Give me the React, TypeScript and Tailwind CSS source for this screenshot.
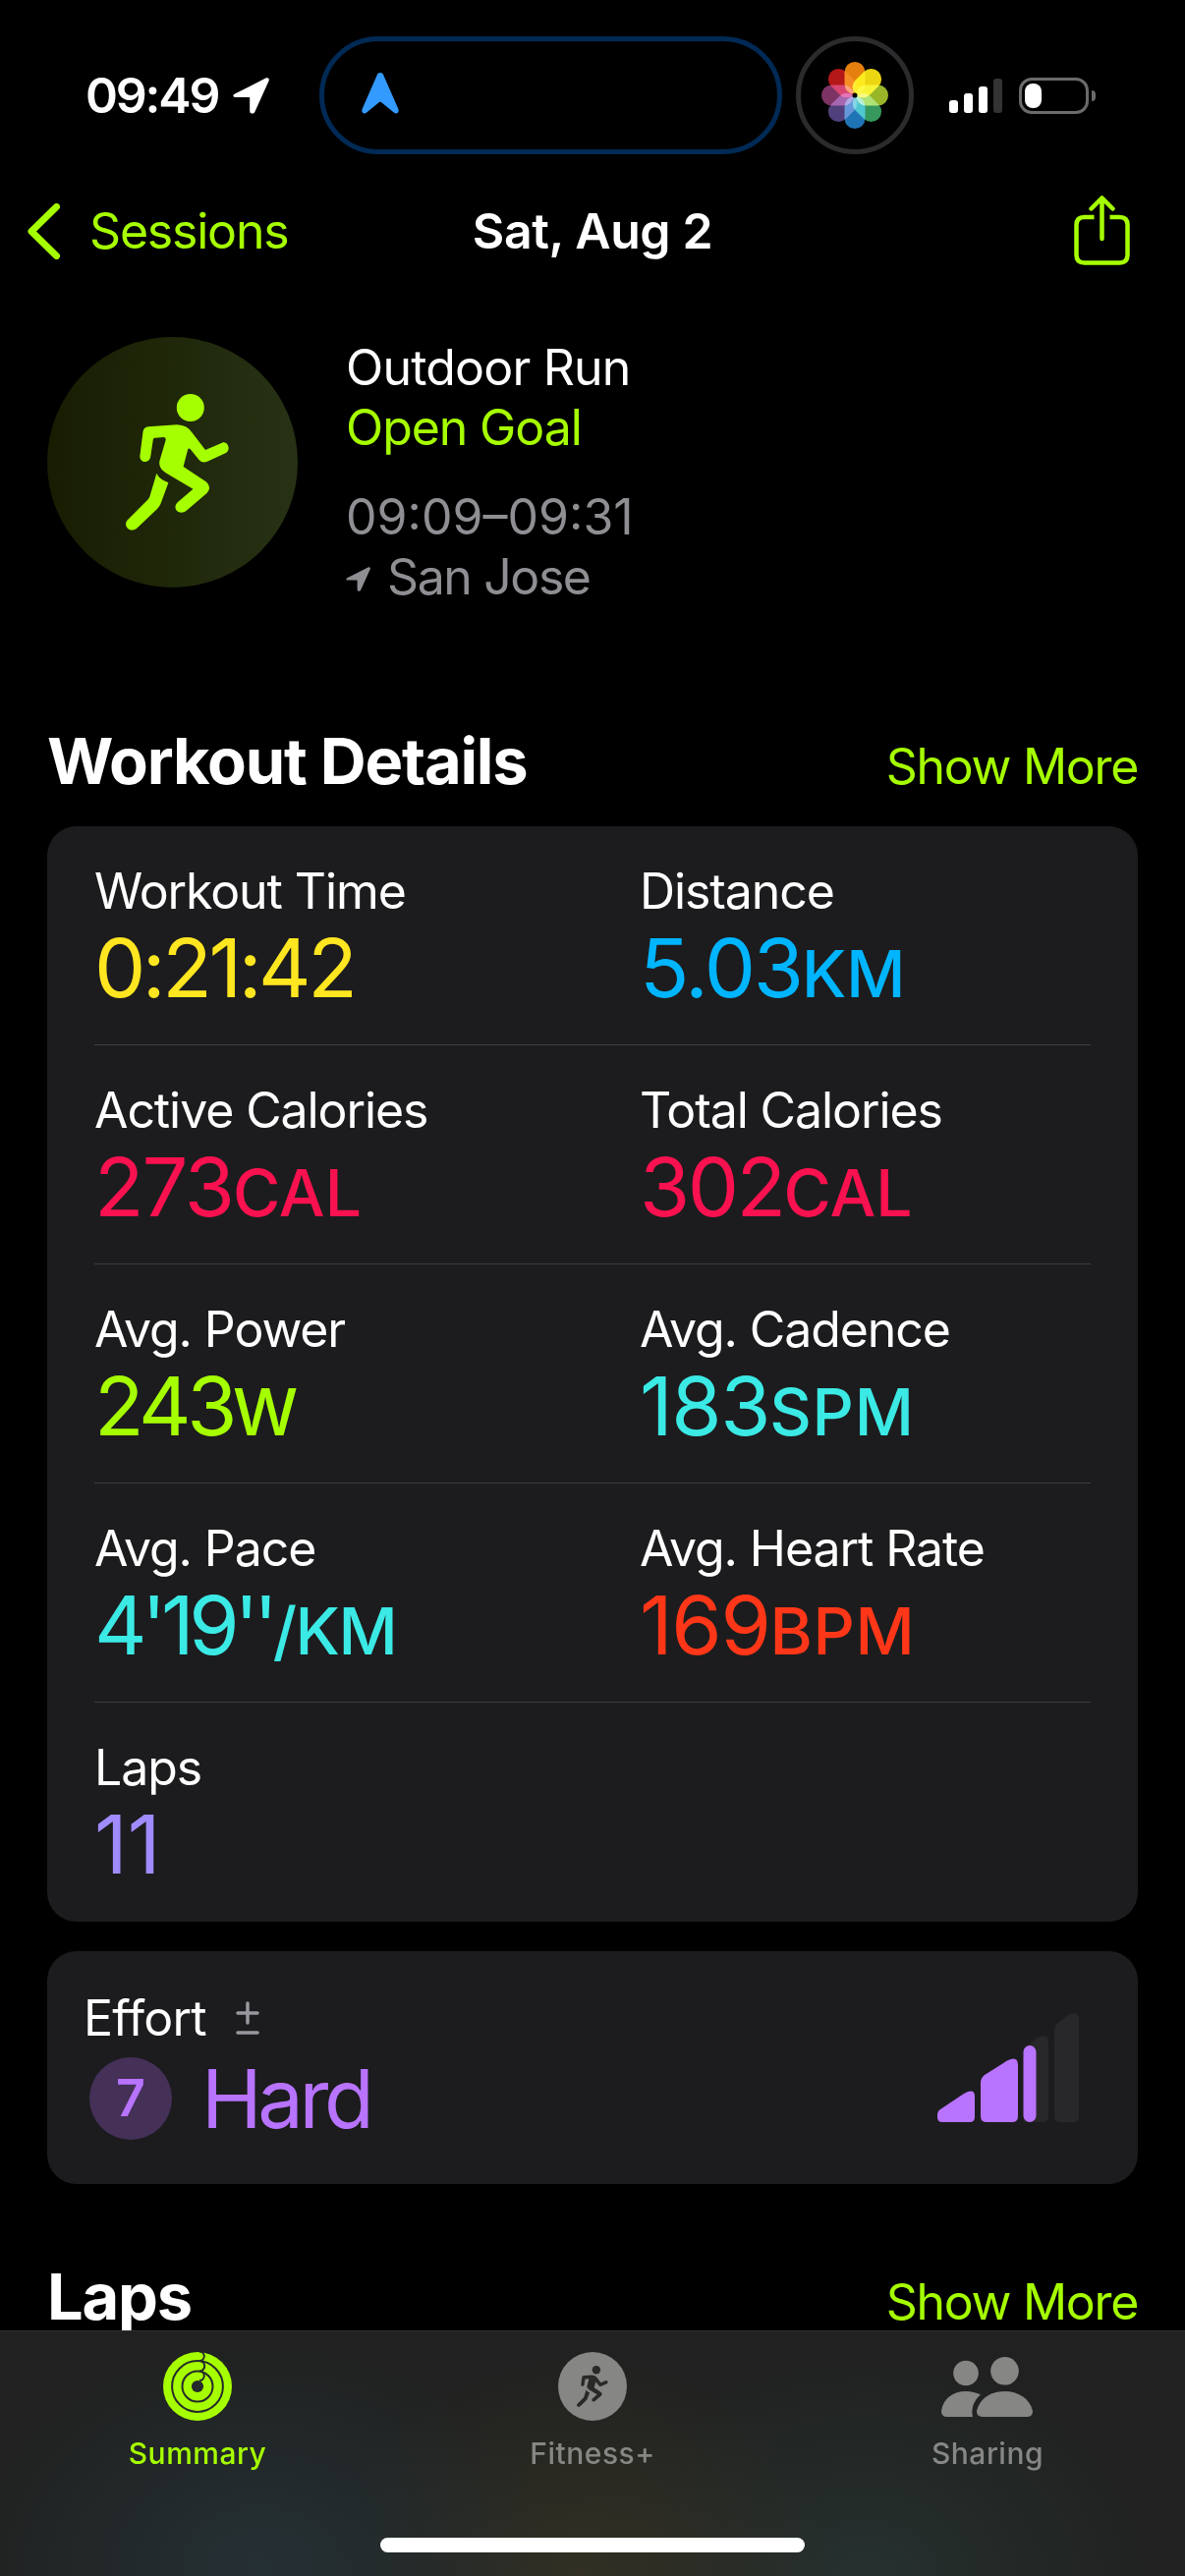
import type { ReactNode } from 'react'

type Metric = { label: string; value: string; unit?: string; color: string; tracking: string; unitTracking?: string }

const rows: Metric[][] = [
  [
    { label: 'Workout Time', value: '0:21:42', color: 'text-[#ffe620]', tracking: 'tracking-[-3.5px]' },
    { label: 'Distance', value: '5.03', unit: 'KM', color: 'text-[#00b5ff]', tracking: 'tracking-[-2.2px]' },
  ],
  [
    { label: 'Active Calories', value: '273', unit: 'CAL', color: 'text-[#fa114f]', tracking: 'tracking-[-2.2px]' },
    { label: 'Total Calories', value: '302', unit: 'CAL', color: 'text-[#fa114f]', tracking: 'tracking-[-2.6px]' },
  ],
  [
    { label: 'Avg. Power', value: '243', unit: 'W', color: 'text-[#a6ff00]', tracking: 'tracking-[-4.4px]' },
    { label: 'Avg. Cadence', value: '183', unit: 'SPM', color: 'text-[#3be9e5]', tracking: 'tracking-[-1.4px]', unitTracking: 'tracking-[0.8px]' },
  ],
  [
    { label: 'Avg. Pace', value: "4'19''", unit: '/KM', color: 'text-[#3be9e5]', tracking: 'tracking-[-5.3px]', unitTracking: 'tracking-[-1.5px]' },
    { label: 'Avg. Heart Rate', value: '169', unit: 'BPM', color: 'text-[#ff3718]', tracking: 'tracking-[-1.4px]', unitTracking: 'tracking-[0.6px]' },
  ],
  [{ label: 'Laps', value: '11', color: 'text-[#a18bff]', tracking: 'tracking-normal' }],
]

const petals = [
  { angle: 0, color: '#e5800f' },
  { angle: 45, color: '#ecd612' },
  { angle: 90, color: '#98b628' },
  { angle: 135, color: '#36985c' },
  { angle: 180, color: '#1f74b6' },
  { angle: 225, color: '#50407c' },
  { angle: 270, color: '#7c3464' },
  { angle: 315, color: '#b41818' },
]

function LocationArrow({ className }: { className: string }) {
  return (
    <svg viewBox="0 0 37 37" className={className} fill="currentColor">
      <path d="M2 16.5 33.5 .6C35.8-.5 37.6 1.3 36.5 3.6L22.3 35C21.2 37.5 17.2 37 17.2 34V20.6Q17.2 20 16.6 20H3C0 20-.6 17.8 2 16.5Z" />
    </svg>
  )
}

function Runner({ className }: { className: string }) {
  return (
    <svg viewBox="128 400 106 139" className={className} fill="currentColor">
      <circle cx="193.8" cy="414" r="14" />
      <path d="M151 433.2 180 431.2Q191 431.5 196 440L209 457 226 449.7C231.5 447.5 235.5 456.5 230 460L211 468.8Q206 471 202.5 467L194 456.5Q192 454.5 191 457L186.6 474 210 489.5Q216 495 210.5 501L190 518.5C183 524.5 174.5 517 180.5 510.5L196.5 496.7 169 480.5Q160.5 475 162.6 467.5L168.7 446.7Q169 444 166.5 444L157.5 444.8Q156 445 155.8 446.5L153.2 464C152 471 142 470.5 142.4 463L145.5 438.5Q146.3 433.5 151 433.2Z" />
      <path d="M159.4 480.7Q162 487 171.4 490.2L163.8 511Q162.6 514.5 160 517L139.5 536.5C132.5 542.5 124.5 534.5 129.8 528.2L150.5 507.5Q152 505.8 152.5 504Z" />
    </svg>
  )
}

function StatusBar() {
  return (
    <div className="flex h-[157px] items-start pt-[37px]">
      <div className="flex h-[120px] w-[325px] items-center gap-[15px] pl-[87px] text-white">
        <span className="text-[50px] font-semibold tracking-[-2.2px]">09:49</span>
        <LocationArrow className="h-[37px] w-[37px]" />
      </div>
      <div className="flex h-[120px] w-[471px] items-center rounded-full border-[5px] border-[#002a55] pl-[38px]">
        <svg viewBox="0 0 38 42" className="mb-1 h-[42px] w-[38px]" fill="#339aff">
          <path d="M15.7 2.5C16.8-.7 21.2-.7 22.3 2.5L37.4 37C38.6 40.5 35.5 43 32.8 40.5L20 30Q19 29.2 18 30L5.2 40.5C2.5 43-.6 40.5 .6 37Z" />
        </svg>
      </div>
      <div className="ml-3.5 flex h-[120px] w-[120px] items-center justify-center rounded-full border-[5px] border-[#2b2b2d]">
        <svg viewBox="-35 -35 70 70" className="h-[70px] w-[70px]">
          {petals.map((p) => (
            <rect key={p.angle} x="-10.5" y="-34" width="21" height="33" rx="10.5" fill={p.color} transform={`rotate(${p.angle})`} className="mix-blend-screen" />
          ))}
          <circle r="2.5" fill="#000" />
        </svg>
      </div>
      <div className="flex h-[120px] items-center gap-[17px] pl-9">
        <div className="flex h-[35px] items-end gap-1.5">
          <div className="h-[13px] w-[9px] rounded-[3px] bg-white" />
          <div className="h-5 w-[9px] rounded-[3px] bg-white" />
          <div className="h-[27px] w-[9px] rounded-[3px] bg-white" />
          <div className="h-[35px] w-[9px] rounded-[3px] bg-[#333]" />
        </div>
        <div className="flex items-center gap-[3px]">
          <div className="h-[37px] w-[71px] rounded-[13px] border-[3px] border-[#6b6b6b] p-[3px]">
            <div className="h-[25px] w-[17px] rounded-[8px] bg-white" />
          </div>
          <div className="h-[11px] w-1 rounded-r-full bg-[#6b6b6b]" />
        </div>
      </div>
    </div>
  )
}

function NavBar() {
  return (
    <div className="grid h-[156px] grid-cols-3 items-center text-[50px]">
      <div className="flex items-center gap-[30px] pl-7 text-[#a6ff00]">
        <svg viewBox="0 0 33 57" className="h-[57px] w-[33px]" fill="none" stroke="currentColor" strokeWidth="7" strokeLinecap="round" strokeLinejoin="round">
          <path d="M29.5 3.5 4 28.5 29.5 53.5" />
        </svg>
        <span className="tracking-[-1.2px]">Sessions</span>
      </div>
      <h1 className="text-center font-semibold tracking-[-0.4px] text-white">Sat, Aug 2</h1>
      <svg viewBox="0 0 57 71" className="mr-14 mb-px h-[71px] w-[57px] justify-self-end text-[#a6ff00]" fill="none" stroke="currentColor" strokeWidth="4.5" strokeLinecap="round" strokeLinejoin="round">
        <path d="M20.5 22H10.5Q2.5 22 2.5 30V60.5Q2.5 68.5 10.5 68.5H46.5Q54.5 68.5 54.5 60.5V30Q54.5 22 46.5 22H36.5" strokeLinecap="butt" />
        <path d="M28.5 44V3M17.5 13.5 28.5 2.5 39.5 13.5" />
      </svg>
    </div>
  )
}

function WorkoutHeader() {
  return (
    <div className="flex gap-[49px] px-12 pt-[30px]">
      <div className="flex h-[255px] w-[255px] items-center justify-center rounded-full bg-linear-to-r from-[#181d02] to-[#273214] text-[#a6ff00]">
        <Runner className="ml-[11px] h-[139px] w-[106px]" />
      </div>
      <div className="pt-px text-[50px] leading-[61px]">
        <p className="tracking-[-0.8px] text-white">Outdoor Run</p>
        <p className="tracking-[-1.1px] text-[#a6ff00]">Open Goal</p>
        <p className="mt-[30px] text-[#8e8e93]">09:09–09:31</p>
        <p className="flex items-center gap-[17px] tracking-[-1.4px] text-[#8e8e93]">
          <LocationArrow className="mt-1 h-[25px] w-[25px]" />
          San Jose
        </p>
      </div>
    </div>
  )
}

function SectionTitle({ children }: { children: ReactNode }) {
  return (
    <div className="flex items-baseline justify-between px-12">
      <h2 className="text-[65px] leading-[80px] font-bold tracking-[-1.2px] text-white">{children}</h2>
      <span className="text-[50px] tracking-[-1.3px] text-[#a6ff00]">Show More</span>
    </div>
  )
}

function MetricCell({ metric }: { metric: Metric }) {
  return (
    <div className="pl-12">
      <p className="text-[50px] leading-[60px] tracking-[-1.1px] text-white">{metric.label}</p>
      <p className={`text-[83px] leading-[96px] ${metric.tracking} ${metric.color}`}>
        {metric.value}
        {metric.unit && (
          <span className={`text-[66px] font-medium ${metric.unitTracking ?? 'tracking-normal'}`}>{metric.unit}</span>
        )}
      </p>
    </div>
  )
}

function EffortCard() {
  return (
    <div className="mx-12 mt-[30px] flex h-[237px] items-start justify-between rounded-[30px] bg-[#1c1c1e] pr-[60px] pl-[37px]">
      <div className="pt-[38px]">
        <div className="flex items-center gap-[30px]">
          <span className="text-[50px] leading-[60px] tracking-[-0.8px] text-white">Effort</span>
          <svg viewBox="0 0 24 34" className="h-[34px] w-6" stroke="#98989e" strokeWidth="3.5" strokeLinecap="round">
            <path d="M12 2V22M2 12H22M2 32H22" />
          </svg>
        </div>
        <div className="mt-2.5 flex items-center gap-[30px] pl-1.5">
          <div className="flex h-[84px] w-[84px] items-center justify-center rounded-full bg-[#453058] text-[52px] font-semibold text-[#b873ff]">7</div>
          <span className="text-[83px] leading-[84px] tracking-[-4.4px] text-[#b873ff]">Hard</span>
        </div>
      </div>
      <svg viewBox="954 2049 144 111" className="mt-[63px] h-[111px] w-[144px]">
        <path d="M954 2153Q954 2149 957 2147L981 2131Q992 2125 992 2134V2155Q992 2160 987 2160H959Q954 2160 954 2155Z" fill="#b873ff" />
        <path d="M998 2120Q998 2115 1002 2112L1025 2097.5Q1036 2092 1036 2102V2154Q1036 2160 1030 2160H1004Q998 2160 998 2154Z" fill="#b873ff" />
        <path d="M1042 2092Q1042 2086 1046 2082L1056 2074Q1067 2069 1067 2079V2154Q1067 2160 1061 2160H1042Z" fill="#28282a" />
        <path d="M1073 2068Q1073 2062 1077 2059L1087 2051Q1098 2046 1098 2056V2154Q1098 2160 1092 2160H1079Q1073 2160 1073 2154Z" fill="#28282a" />
        <rect x="1041.5" y="2082" width="13" height="78" rx="6.5" fill="#b873ff" />
      </svg>
    </div>
  )
}

function RingsIcon() {
  return (
    <svg viewBox="-35 -35 70 70" className="h-[70px] w-[70px]">
      <circle r="35" fill="#a6ff00" />
      <g fill="none" stroke="#252a2a" strokeWidth="2">
        <circle r="25.9" />
        <circle r="15.5" />
        <path d="M2-35.5A4.8 4.8 0 0 1 2-25.9A5.2 5.2 0 0 1 2-15.5A4.8 4.8 0 0 1 2-5.9" />
      </g>
      <circle r="6.1" fill="#252a2a" />
    </svg>
  )
}

function TabBar() {
  return (
    <div className="absolute inset-x-0 bottom-0 h-[250px] border-t border-[#303030] bg-[#202120] bg-[radial-gradient(ellipse_300px_230px_at_265px_240px,#253034,transparent),radial-gradient(ellipse_260px_230px_at_590px_250px,#323024,transparent),radial-gradient(ellipse_300px_230px_at_880px_250px,#26312f,transparent)]">
      <div className="grid grid-cols-3 pt-[21px] text-[30px] leading-[36px] font-medium tracking-[0.5px] text-[#868684]">
        <div className="flex flex-col items-center gap-[15px] text-[#a6ff00]">
          <RingsIcon />
          Summary
        </div>
        <div className="flex flex-col items-center gap-[15px]">
          <div className="flex h-[70px] w-[70px] items-center justify-center rounded-full bg-[#868684] text-[#292927]">
            <Runner className="h-[42px] w-[32px]" />
          </div>
          Fitness+
        </div>
        <div className="flex flex-col items-center gap-[15px]">
          <svg viewBox="958 2394 93 70" className="mr-0.5 h-[70px] w-[93px]" fill="currentColor">
            <circle cx="983" cy="2415.5" r="12.8" />
            <circle cx="1022.5" cy="2413.3" r="14.3" />
            <path d="M964 2460Q958 2460 958 2454C960 2441 970 2434 983 2434Q991 2434 998 2437.5C991 2443 988 2452 990 2460Z" />
            <path d="M1000 2460Q993.8 2460 994 2454C997 2441 1009 2434 1022.5 2434S1048 2441 1051 2454Q1051 2460 1045 2460Z" />
          </svg>
          Sharing
        </div>
      </div>
      <div className="mx-auto mt-[68px] h-[15px] w-[432px] rounded-full bg-white" />
    </div>
  )
}

export default function App() {
  return (
    <div className="relative h-[2622px] w-[1206px] overflow-hidden bg-black font-['Inter','Liberation_Sans',sans-serif]">
      <StatusBar />
      <NavBar />
      <WorkoutHeader />
      <div className="mt-[117px]">
        <SectionTitle>Workout Details</SectionTitle>
      </div>
      <div className="mx-12 mt-[23px] rounded-[30px] bg-[#1c1c1e]">
        {rows.map((row, i) => (
          <div key={i}>
            <div className="grid h-[222px] grid-cols-2 pt-[36px]">
              {row.map((metric) => (
                <MetricCell key={metric.label} metric={metric} />
              ))}
            </div>
            <div className={i < rows.length - 1 ? 'mx-12 h-px bg-[#3d3d41]' : 'h-px'} />
          </div>
        ))}
      </div>
      <EffortCard />
      <div className="mt-[75px]">
        <SectionTitle>Laps</SectionTitle>
      </div>
      <TabBar />
    </div>
  )
}
